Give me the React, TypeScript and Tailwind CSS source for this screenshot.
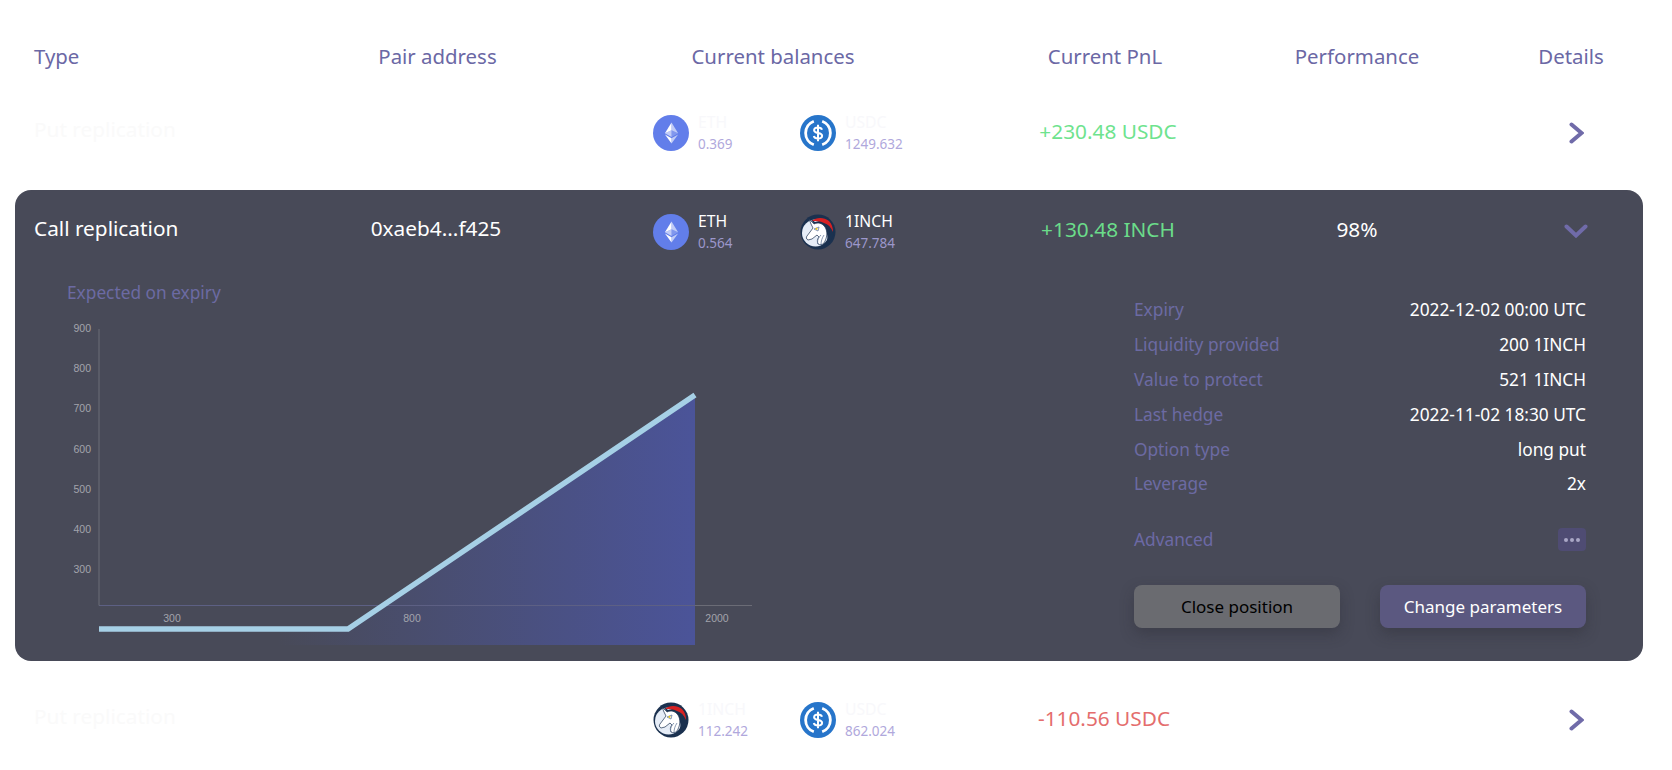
import React from "react";

const columns = "grid grid-cols-[296px_215px_456px_208px_296px_132px] items-center pl-[19px] pr-[6px]";

const EthIcon = () => (
  <svg viewBox="0 0 32 32" className="w-9 h-9 shrink-0">
    <circle cx="16" cy="16" r="16" fill="#627eea" />
    <g fill="#fff" transform="translate(3.600 3.500) scale(0.78)">
      <path fillOpacity=".6" d="M16.500 4v8.870l7.500 3.350z" />
      <path d="M16.500 4L9 16.220l7.500-3.350z" />
      <path fillOpacity=".6" d="M16.500 21.970V28L24 17.620z" />
      <path d="M16.500 28v-6.030L9 17.620z" />
      <path fillOpacity=".2" d="M16.500 20.570l7.500-4.350-7.500-3.350z" />
      <path fillOpacity=".6" d="M9 16.220l7.500 4.350v-7.700z" />
    </g>
  </svg>
);

const UsdcIcon = () => (
  <svg viewBox="0 0 36 36" className="w-9 h-9 shrink-0">
    <circle cx="18" cy="18" r="18" fill="#2775ca" />
    <path d="M13.800 6.200a12.600 12.600 0 0 0 0 23.600M22.200 6.200a12.600 12.600 0 0 1 0 23.600" fill="none" stroke="#fff" strokeWidth="2.800" />
    <path d="M22 14.800c-.4-1.600-1.900-2.400-4-2.400-2.300 0-3.900 1.100-3.900 2.800 0 4 8 1.700 8 5.600 0 1.800-1.700 2.800-4.100 2.800-2.300 0-3.800-.9-4.200-2.500M18 9.800v16.400" fill="none" stroke="#fff" strokeWidth="2" />
  </svg>
);

const InchIcon = () => (
  <svg viewBox="0 0 36 36" className="w-9 h-9 shrink-0">
    <circle cx="18" cy="18" r="17.500" fill="#1b314f" />
    <circle cx="15.500" cy="19" r="13.500" fill="#e6edf7" />
    <path d="M9 3l6 5 8-2 8 6 3 8-3 6-5 4c2-5 2-10-1-14-2-2-5-3-8-2z" fill="#1b314f" />
    <path d="M12 7c4-4 12-4 17 0 3 3 4 7 4 11-2-5-5-8-9-9-4-2-8-2-12-2z" fill="#d82122" />
    <path d="M9 5l5 5c4-2 8-1 11 3 3 5 2 11-1 16-2 2-4 2-6 1-1-2-1-5 1-7l-2-2-5 4-4 1c-2-1-2-3-1-4l6-8-2-4z" fill="#fff" stroke="#1b314f" strokeWidth="0.700" />
    <path d="M14 15l5-2-1 4zM18 30c-1-3 0-6 3-9M21 31c0-4 1-7 3-10" fill="none" stroke="#6b7f9e" strokeWidth="0.800" />
    <circle cx="16.500" cy="14.800" r="1.100" fill="#e8c81a" />
  </svg>
);

const Chevron = ({ open }: { open?: boolean }) =>
  open ? (
    <svg viewBox="0 0 24 14" className="w-6 h-[14px] ml-[9px] mt-[4px]" fill="none" stroke="#706ba9" strokeWidth="4" strokeLinecap="round">
      <path d="M2.500 2.500L12 11.500L21.500 2.500" />
    </svg>
  ) : (
    <svg viewBox="0 0 15 22" className="w-[15px] h-[22px] ml-[10px] mt-[1px]" fill="none" stroke="#706ba9" strokeWidth="4" strokeLinecap="round">
      <path d="M2.500 2.500L12.500 11L2.500 19.500" />
    </svg>
  );

type Token = { name: string; amount: string; icon: React.ReactNode };

const Balance = ({ token, active }: { token: Token; active?: boolean }) => (
  <div className="flex items-center gap-[9px] w-[147px]">
    {token.icon}
    <div className="flex flex-col -mt-[1px]">
      <span className={`text-[15.700px] leading-[22px] ${active ? "text-white" : "text-[#f8f8fb]"}`}>{token.name}</span>
      <span className={`text-[13.500px] leading-[22px] ${active ? "text-[#9c97cb]" : "text-[#b0a8dc]"}`}>{token.amount}</span>
    </div>
  </div>
);

const Row = ({ type, tokens, pnl, pnlColor, shift }: { type: string; tokens: Token[]; pnl: string; pnlColor: string; shift: string }) => (
  <div className={`${columns} h-[116px]`}>
    <div className="text-[20.800px] text-[#fafafa] -mt-[4px]">{type}</div>
    <div />
    <div className="flex pl-[108px] mt-[2px]">
      {tokens.map((t) => (
        <Balance key={t.name} token={t} />
      ))}
    </div>
    <div className={`text-center text-[20.800px] whitespace-nowrap ${pnlColor} ${shift}`}>{pnl}</div>
    <div />
    <div className="flex justify-center">
      <Chevron />
    </div>
  </div>
);

const details = [
  ["Expiry", "2022-12-02 00:00 UTC"],
  ["Liquidity provided", "200 1INCH"],
  ["Value to protect", "521 1INCH"],
  ["Last hedge", "2022-11-02 18:30 UTC"],
  ["Option type", "long put"],
  ["Leverage", "2x"],
];

const Chart = () => (
  <svg viewBox="60 320 720 330" className="w-[720px] h-[330px] block" fontFamily="'Liberation Sans', sans-serif" fontSize="10.500" fill="#a3a4ac">
    <defs>
      <linearGradient id="area" x1="99" x2="695" y1="0" y2="0" gradientUnits="userSpaceOnUse">
        <stop offset="0.3" stopColor="#484a58" />
        <stop offset="1" stopColor="#4b5499" />
      </linearGradient>
    </defs>
    <path d="M99 329V605.500H752" fill="none" stroke="#6b6c76" strokeWidth="1" />
    <path d="M99 629H348L695 396V645H99Z" fill="url(#area)" />
    <path d="M99.500 605.500H695" fill="none" stroke="#5d6084" strokeWidth="1" />
    <path d="M99 629H348L695 395" fill="none" stroke="#a6d0e6" strokeWidth="5.500" />
    {[900, 800, 700, 600, 500, 400, 300].map((v, i) => (
      <text key={v} x="91" y={332 + i * 40.200} textAnchor="end">
        {v}
      </text>
    ))}
    <text x="172" y="622" textAnchor="middle">300</text>
    <text x="412" y="622" textAnchor="middle">800</text>
    <text x="717" y="622" textAnchor="middle">2000</text>
  </svg>
);

export default function App() {
  return (
    <div className="h-screen overflow-hidden bg-white px-[15px] pt-10 font-['Noto_Sans',sans-serif]">
      {/* Table head */}
      <div className={`${columns} h-[32px] mb-[2px] text-[20.400px] text-[#6b68a5]`}>
        <div>Type</div>
        <div className="text-center">Pair address</div>
        <div className="text-center">Current balances</div>
        <div className="text-center">Current PnL</div>
        <div className="text-center">Performance</div>
        <div className="text-center">Details</div>
      </div>

      <Row
        type="Put replication"
        tokens={[
          { name: "ETH", amount: "0.369", icon: <EthIcon /> },
          { name: "USDC", amount: "1249.632", icon: <UsdcIcon /> },
        ]}
        pnl="+230.48 USDC"
        pnlColor="text-[#6ee38e]"
        shift="ml-[6px]"
      />

      {/* Expanded position */}
      <div className="h-[471px] w-[1628px] rounded-2xl bg-[#484a58]">
        <div className={`${columns} h-[78px]`}>
          <div className="text-[20.800px] text-white">Call replication</div>
          <div className="text-center text-[20.800px] text-white -ml-[3px]">0xaeb4...f425</div>
          <div className="flex pl-[108px] mt-[6px]">
            <Balance active token={{ name: "ETH", amount: "0.564", icon: <EthIcon /> }} />
            <Balance active token={{ name: "1INCH", amount: "647.784", icon: <InchIcon /> }} />
          </div>
          <div className="text-center text-[20.800px] whitespace-nowrap text-[#6bdc8a] mt-[2px] ml-[6px]">+130.48 INCH</div>
          <div className="text-center text-[20.800px] text-white mt-[2px]">98%</div>
          <div className="flex justify-center">
            <Chevron open />
          </div>
        </div>

        <div className="flex justify-between pl-[45px] pr-[57px]">
          <div className="pt-[13px]">
            <div className="pl-[7px] h-6 leading-6 text-[17.300px] text-[#6c6aa3]">Expected on expiry</div>
            <div className="mt-[15px]">
              <Chart />
            </div>
          </div>

          <div className="w-[452px] pt-[25px]">
            {details.map(([label, value]) => (
              <div key={label} className="flex h-[34.800px] items-center justify-between text-[17.300px]">
                <span className="text-[#6c6aa3]">{label}</span>
                <span className="text-white">{value}</span>
              </div>
            ))}
            <div className="mt-[26px] flex h-6 items-center justify-between">
              <span className="text-[17.300px] text-[#6c69a5]">Advanced</span>
              <button className="flex h-[23px] w-7 items-center justify-center gap-[2px] rounded bg-[#4f4c73]">
                <span className="h-1 w-1 rounded-full bg-[#a9a7c6]" />
                <span className="h-1 w-1 rounded-full bg-[#a9a7c6]" />
                <span className="h-1 w-1 rounded-full bg-[#a9a7c6]" />
              </button>
            </div>
            <div className="mt-[33px] flex justify-between">
              <button className="h-[43px] w-[206px] rounded-lg bg-[#6a6b70] text-[17px] text-black shadow-[0_6px_14px_rgba(40,40,50,0.35)]">
                Close position
              </button>
              <button className="h-[43px] w-[206px] rounded-lg bg-[#5b5880] text-[17px] text-white shadow-[0_6px_14px_rgba(40,40,50,0.35)]">
                Change parameters
              </button>
            </div>
          </div>
        </div>
      </div>

      <Row
        type="Put replication"
        tokens={[
          { name: "1INCH", amount: "112.242", icon: <InchIcon /> },
          { name: "USDC", amount: "862.024", icon: <UsdcIcon /> },
        ]}
        pnl="-110.56 USDC"
        pnlColor="text-[#e46d6d]"
        shift="-ml-[2px]"
      />
    </div>
  );
}
